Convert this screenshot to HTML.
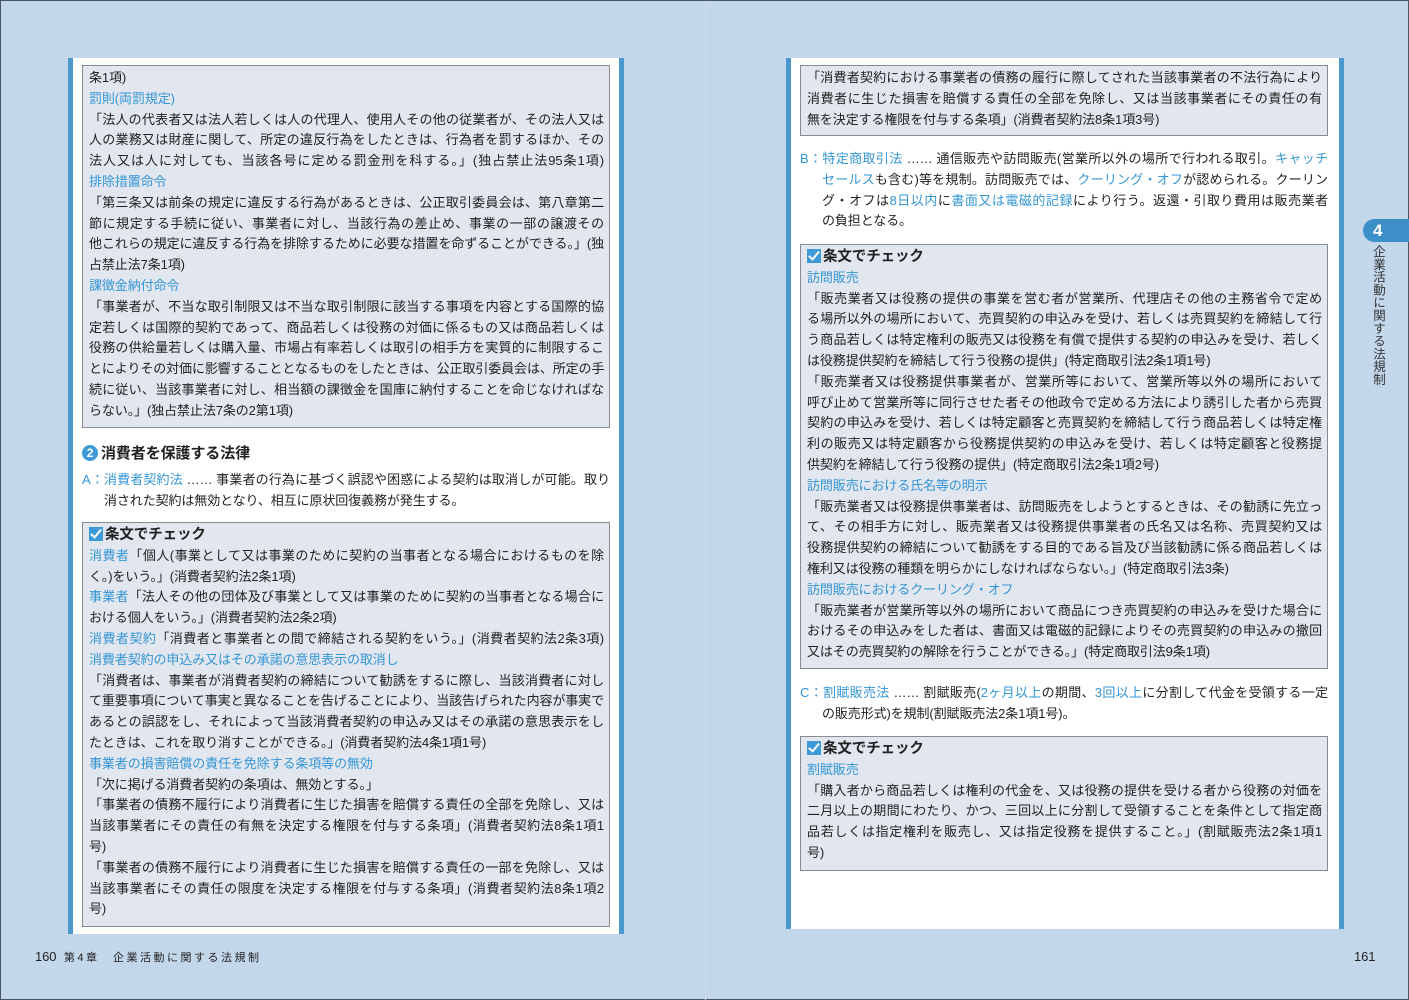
<!DOCTYPE html>
<html><head><meta charset="utf-8">
<style>
*{margin:0;padding:0;box-sizing:border-box}
html,body{width:1409px;height:1000px;overflow:hidden}
body{background:#c3d7eb;position:relative;font-family:"Liberation Sans","Noto Sans CJK JP",sans-serif;color:#222;border:1px solid #4a5560}
.fold{position:absolute;left:704px;top:0;width:1px;height:1000px;background:#cbdcee}
.panel{position:absolute;background:#fff;border-left:5px solid #4a98cc;border-right:5px solid #4a98cc}
.box{position:absolute;background:#e1e6ef;border:1px solid #868b92;padding:2px 6px 0 6px}
.t{position:absolute;font-size:13px;line-height:20.8px;white-space:nowrap;letter-spacing:-0.1px}
.t div{white-space:nowrap;text-align:justify;text-align-last:justify;text-justify:inter-character}
.box .t div{width:515px}
.p div{width:528px}
.t div.s{text-align-last:left}
.b{color:#3596d4}
.chk{font-weight:bold;font-size:14.5px}
.cb{display:inline-block;width:14px;height:14px;background:#3d9ad6;vertical-align:-2px;margin-right:2px;position:relative}
.cb:after{content:"";position:absolute;left:4px;top:0px;width:4px;height:9px;border:solid #fff;border-width:0 2px 2px 0;transform:rotate(40deg)}
.ind{padding-left:22px}
</style></head><body>
<div class="fold"></div>

<!-- LEFT PAGE -->
<div class="panel" style="left:67px;top:57px;width:556px;height:876px"></div>
<div class="box" style="left:81px;top:64px;width:528px;height:363px">
<div class="t" style="position:static">
<div class="s">条1項)</div>
<div class="b s">罰則(両罰規定)</div>
<div>「法人の代表者又は法人若しくは人の代理人、使用人その他の従業者が、その法人又は</div>
<div>人の業務又は財産に関して、所定の違反行為をしたときは、行為者を罰するほか、その</div>
<div>法人又は人に対しても、当該各号に定める罰金刑を科する。」(独占禁止法95条1項)</div>
<div class="b s">排除措置命令</div>
<div>「第三条又は前条の規定に違反する行為があるときは、公正取引委員会は、第八章第二</div>
<div>節に規定する手続に従い、事業者に対し、当該行為の差止め、事業の一部の譲渡その</div>
<div>他これらの規定に違反する行為を排除するために必要な措置を命ずることができる。」(独</div>
<div class="s">占禁止法7条1項)</div>
<div class="b s">課徴金納付命令</div>
<div>「事業者が、不当な取引制限又は不当な取引制限に該当する事項を内容とする国際的協</div>
<div>定若しくは国際的契約であって、商品若しくは役務の対価に係るもの又は商品若しくは</div>
<div>役務の供給量若しくは購入量、市場占有率若しくは取引の相手方を実質的に制限するこ</div>
<div>とによりその対価に影響することとなるものをしたときは、公正取引委員会は、所定の手</div>
<div>続に従い、当該事業者に対し、相当額の課徴金を国庫に納付することを命じなければな</div>
<div class="s">らない。」(独占禁止法7条の2第1項)</div>
</div></div>

<div class="t" style="left:81px;top:442px;font-size:15px;font-weight:bold;line-height:22px"><span style="display:inline-block;width:16px;height:16px;border-radius:50%;background:#3d9ad6;color:#fff;font-size:12px;line-height:16px;text-align:center;vertical-align:1px;margin-right:3px">2</span>消費者を保護する法律</div>
<div class="t p" style="left:81px;top:469px">
<div><span class="b">A：消費者契約法</span> …… 事業者の行為に基づく誤認や困惑による契約は取消しが可能。取り</div>
<div class="ind s">消された契約は無効となり、相互に原状回復義務が発生する。</div>
</div>

<div class="box" style="left:81px;top:521px;width:528px;height:405px">
<div class="t" style="position:static">
<div class="chk s"><span class="cb"></span>条文でチェック</div>
<div><span class="b">消費者</span>「個人(事業として又は事業のために契約の当事者となる場合におけるものを除</div>
<div class="s">く。)をいう。」(消費者契約法2条1項)</div>
<div><span class="b">事業者</span>「法人その他の団体及び事業として又は事業のために契約の当事者となる場合に</div>
<div class="s">おける個人をいう。」(消費者契約法2条2項)</div>
<div><span class="b">消費者契約</span>「消費者と事業者との間で締結される契約をいう。」(消費者契約法2条3項)</div>
<div class="b s">消費者契約の申込み又はその承諾の意思表示の取消し</div>
<div>「消費者は、事業者が消費者契約の締結について勧誘をするに際し、当該消費者に対し</div>
<div>て重要事項について事実と異なることを告げることにより、当該告げられた内容が事実で</div>
<div>あるとの誤認をし、それによって当該消費者契約の申込み又はその承諾の意思表示をし</div>
<div class="s">たときは、これを取り消すことができる。」(消費者契約法4条1項1号)</div>
<div class="b s">事業者の損害賠償の責任を免除する条項等の無効</div>
<div class="s">「次に掲げる消費者契約の条項は、無効とする。」</div>
<div>「事業者の債務不履行により消費者に生じた損害を賠償する責任の全部を免除し、又は</div>
<div>当該事業者にその責任の有無を決定する権限を付与する条項」(消費者契約法8条1項1</div>
<div class="s">号)</div>
<div>「事業者の債務不履行により消費者に生じた損害を賠償する責任の一部を免除し、又は</div>
<div>当該事業者にその責任の限度を決定する権限を付与する条項」(消費者契約法8条1項2</div>
<div class="s">号)</div>
</div></div>

<div class="t" style="left:34px;top:946px;font-size:13px">160 <span style="font-size:11px;letter-spacing:2.5px;margin-left:4px">第4章　企業活動に関する法規制</span></div>

<!-- RIGHT PAGE -->
<div class="panel" style="left:785px;top:57px;width:558px;height:871px"></div>
<div class="box" style="left:799px;top:64px;width:528px;height:71px">
<div class="t" style="position:static">
<div>「消費者契約における事業者の債務の履行に際してされた当該事業者の不法行為により</div>
<div>消費者に生じた損害を賠償する責任の全部を免除し、又は当該事業者にその責任の有</div>
<div class="s">無を決定する権限を付与する条項」(消費者契約法8条1項3号)</div>
</div></div>

<div class="t p" style="left:799px;top:148px">
<div><span class="b">B：特定商取引法</span> …… 通信販売や訪問販売(営業所以外の場所で行われる取引。<span class="b">キャッチ</span></div>
<div class="ind"><span class="b">セールス</span>も含む)等を規制。訪問販売では、<span class="b">クーリング・オフ</span>が認められる。クーリン</div>
<div class="ind">グ・オフは<span class="b">8日以内</span>に<span class="b">書面又は電磁的記録</span>により行う。返還・引取り費用は販売業者</div>
<div class="ind s">の負担となる。</div>
</div>

<div class="box" style="left:799px;top:243px;width:528px;height:425px">
<div class="t" style="position:static">
<div class="chk s"><span class="cb"></span>条文でチェック</div>
<div class="b s">訪問販売</div>
<div>「販売業者又は役務の提供の事業を営む者が営業所、代理店その他の主務省令で定め</div>
<div>る場所以外の場所において、売買契約の申込みを受け、若しくは売買契約を締結して行</div>
<div>う商品若しくは特定権利の販売又は役務を有償で提供する契約の申込みを受け、若しく</div>
<div class="s">は役務提供契約を締結して行う役務の提供」(特定商取引法2条1項1号)</div>
<div>「販売業者又は役務提供事業者が、営業所等において、営業所等以外の場所において</div>
<div>呼び止めて営業所等に同行させた者その他政令で定める方法により誘引した者から売買</div>
<div>契約の申込みを受け、若しくは特定顧客と売買契約を締結して行う商品若しくは特定権</div>
<div>利の販売又は特定顧客から役務提供契約の申込みを受け、若しくは特定顧客と役務提</div>
<div class="s">供契約を締結して行う役務の提供」(特定商取引法2条1項2号)</div>
<div class="b s">訪問販売における氏名等の明示</div>
<div>「販売業者又は役務提供事業者は、訪問販売をしようとするときは、その勧誘に先立っ</div>
<div>て、その相手方に対し、販売業者又は役務提供事業者の氏名又は名称、売買契約又は</div>
<div>役務提供契約の締結について勧誘をする目的である旨及び当該勧誘に係る商品若しくは</div>
<div class="s">権利又は役務の種類を明らかにしなければならない。」(特定商取引法3条)</div>
<div class="b s">訪問販売におけるクーリング・オフ</div>
<div>「販売業者が営業所等以外の場所において商品につき売買契約の申込みを受けた場合に</div>
<div>おけるその申込みをした者は、書面又は電磁的記録によりその売買契約の申込みの撤回</div>
<div class="s">又はその売買契約の解除を行うことができる。」(特定商取引法9条1項)</div>
</div></div>

<div class="t p" style="left:799px;top:682px">
<div><span class="b">C：割賦販売法</span> …… 割賦販売(<span class="b">2ヶ月以上</span>の期間、<span class="b">3回以上</span>に分割して代金を受領する一定</div>
<div class="ind s">の販売形式)を規制(割賦販売法2条1項1号)。</div>
</div>

<div class="box" style="left:799px;top:735px;width:528px;height:135px">
<div class="t" style="position:static">
<div class="chk s"><span class="cb"></span>条文でチェック</div>
<div class="b s">割賦販売</div>
<div>「購入者から商品若しくは権利の代金を、又は役務の提供を受ける者から役務の対価を</div>
<div>二月以上の期間にわたり、かつ、三回以上に分割して受領することを条件として指定商</div>
<div>品若しくは指定権利を販売し、又は指定役務を提供すること。」(割賦販売法2条1項1</div>
<div class="s">号)</div>
</div></div>

<div class="t" style="left:1353px;top:946px;font-size:13px">161</div>

<!-- tab -->
<div style="position:absolute;left:1362px;top:218px;width:48px;height:23px;background:#3d8fc8;border-radius:12px 0 0 12px;color:#fff;font-weight:bold;font-size:17px;line-height:23px;padding-left:10px;font-family:'Liberation Sans',sans-serif">4</div>
<div style="position:absolute;left:1368px;top:244px;writing-mode:vertical-rl;font-size:12.5px;letter-spacing:0.3px;color:#333;font-family:'Liberation Sans','Noto Sans CJK JP',sans-serif">企業活動に関する法規制</div>
</body></html>
